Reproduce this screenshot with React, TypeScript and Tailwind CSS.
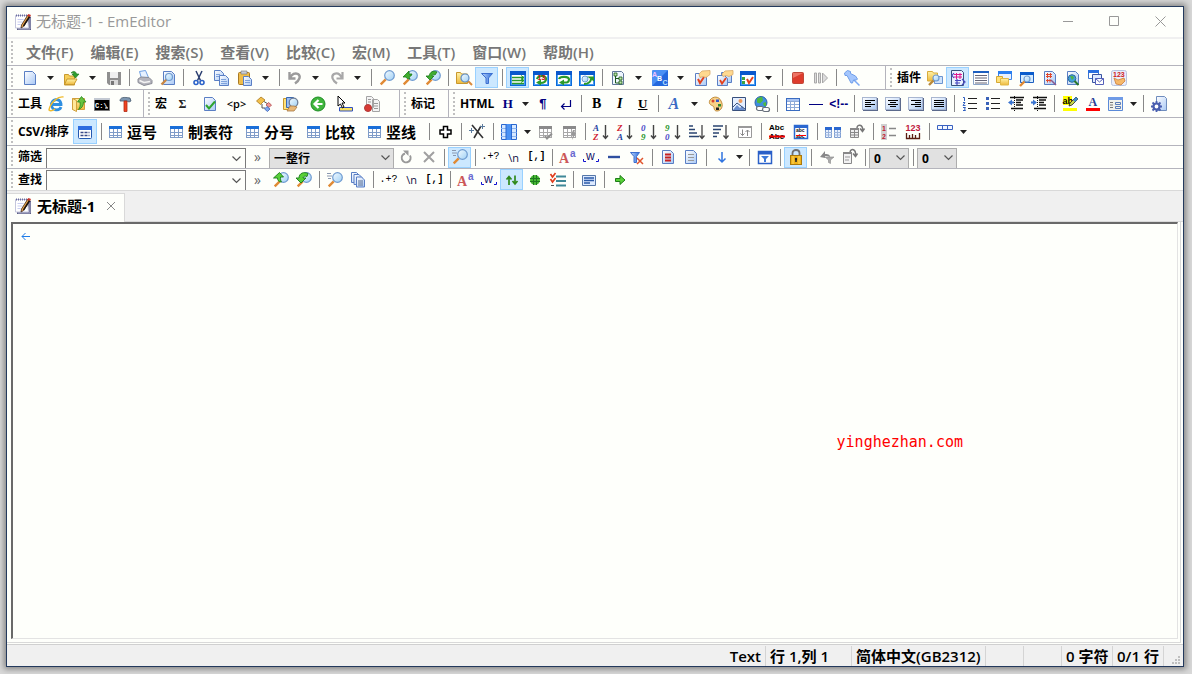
import { ReactNode } from "react";

interface BandProps {
  label?: string;
  className?: string;
  children?: ReactNode;
}

interface ToolsProps {
  items: string[];
  slot?: string;
}

/* ---------- shared icon parts ---------- */

const Svg = ({ children }: { children: ReactNode }) => (
  <svg width="16" height="16" viewBox="0 0 16 16" fill="none" className="overflow-visible" aria-hidden="true">
    {children}
  </svg>
);

const Gradients = () => (
  <svg width="0" height="0" className="absolute" aria-hidden="true">
    <defs>
      <linearGradient id="paper" x1="0" y1="0" x2="1" y2="1">
        <stop offset="0" stopColor="#ffffff" />
        <stop offset="1" stopColor="#a9c9f5" />
      </linearGradient>
      <linearGradient id="glass" x1="0" y1="0" x2="1" y2="1">
        <stop offset="0" stopColor="#f4fbff" />
        <stop offset="1" stopColor="#9fd0f5" />
      </linearGradient>
      <linearGradient id="folder" x1="0" y1="0" x2="0" y2="1">
        <stop offset="0" stopColor="#fff3a8" />
        <stop offset="1" stopColor="#eeb93c" />
      </linearGradient>
      <linearGradient id="blue" x1="0" y1="0" x2="1" y2="0">
        <stop offset="0" stopColor="#b9d4fb" />
        <stop offset="1" stopColor="#2f6fdc" />
      </linearGradient>
    </defs>
  </svg>
);

const Doc = ({ x = 2.5, y = 1.5, w = 11, h = 13 }) => (
  <path
    d={`M${x} ${y}h${w - 3}l3 3v${h - 3}h-${w}z`}
    fill="url(#paper)"
    stroke="#5a7fc4"
  />
);

const Lens = ({ x = 10.5, y = 5.5, r = 4.8, handle = "#e08a34" }) => (
  <>
    <path d={`M${x - r + 1} ${y + r - 1}L${x - r - 4} ${y + r + 4}`} stroke={handle} strokeWidth="2.4" />
    <circle cx={x} cy={y} r={r} fill="url(#glass)" stroke="#6f9bd0" strokeWidth="1.2" />
  </>
);

// lens with the handle to the lower right
const LensRight = ({ x = 8, y = 7, r = 3.5, handle = "#d98a3c" }) => (
  <>
    <path d={`M${x + r - 1} ${y + r - 1}l4 4`} stroke={handle} strokeWidth="2" />
    <circle cx={x} cy={y} r={r} fill="url(#glass)" stroke="#5f8cc4" strokeWidth="1.2" />
  </>
);

const Folder = () => (
  <path d="M0.5 2.5h4l1 1.5h6v9.5h-11z" fill="url(#folder)" stroke="#c9982c" />
);

const Frame = () => (
  <g shapeRendering="crispEdges">
    <rect x="0.5" y="1.5" width="15" height="14" fill="#fff" stroke="#0a6cdc" />
    <path d="M0 1h16v4h-16z" fill="#0a58cc" />
    <path d="M1.5 5v10M14.5 5v10M1 14.5h14" stroke="#4a9cf0" />
  </g>
);

const Table = ({ head = "#1a6fd8", line = "#7f9cc8" }) => (
  <g shapeRendering="crispEdges">
    <rect x="2" y="2" width="13" height="12" fill="#fff" />
    <path d="M2.5 5v8.5h12v-8.5M2 8.5h13M2 11h13M6.5 5v9M10.5 5v9" stroke={line} />
    <path d="M2 2h13v3h-13z" fill={head} />
  </g>
);

const AlignBox = ({ d }: { d: string }) => (
  <g shapeRendering="crispEdges">
    <rect x="0.5" y="1.5" width="14" height="12" fill="url(#paper)" stroke="#a8b6d0" />
    <path d="M1 14.5h15M15.5 2v12" stroke="#5c6a8c" />
    <path d={d} stroke="#000" />
  </g>
);

const SortPair = ({ top, bottom, a, b }: { top: string; bottom: string; a: string; b: string }) => (
  <>
    <text x="0" y="7" fontSize="9" fontWeight="700" fontStyle="italic" fontFamily="Liberation Serif" fill={a}>
      {top}
    </text>
    <text x="0" y="16" fontSize="9" fontWeight="700" fontStyle="italic" fontFamily="Liberation Serif" fill={b}>
      {bottom}
    </text>
    <path d="M12.5 1v13M10 11.5l2.5 3 2.5-3" stroke="#444" strokeWidth="1.4" />
  </>
);

const Glyph = ({ children, className }: { children: ReactNode; className: string }) => (
  <span className={`leading-none ${className}`}>{children}</span>
);

const Notepad = () => (
  <svg width="16" height="16" viewBox="0 0 16 16" fill="none" aria-hidden="true">
    <path d="M2 3h14v13h-14z" fill="#5c5e86" />
    <path d="M3 15h12v-11" stroke="#a6a7c4" />
    <path d="M0.5 1.5h12l1 12.5h-13z" fill="#fff" stroke="#c4c6dc" />
    <path d="M1 1.5h12" stroke="#6a6ca0" strokeDasharray="1 1" strokeWidth="2" />
    <path d="M2.5 5.5h6M2.5 8h5M2.5 10.5h3" stroke="#c8cdf0" />
    <path d="M12.5 1.5l2.5 1-6.5 10-2.5 1.5.5-3z" fill="#f0a848" stroke="#3d2a20" strokeWidth="0.8" />
    <path d="M14.5 2.5l-6 9.5" stroke="#1c1410" strokeWidth="1.5" />
    <path d="M12 1.500l3 1.500 1-2-2.500-1z" fill="#c8342c" />
  </svg>
);

/* ---------- icons by name ---------- */

const icons: Record<string, ReactNode> = {
  新建: <Svg><Doc /></Svg>,
  打开: (
    <Svg>
      <path d="M0.5 4.5h4l1 1.5h5v9h-10z" fill="#f6cf5a" stroke="#c99a2e" />
      <path d="M3 9h10l-3 5.5h-9.5z" fill="url(#folder)" stroke="#c99a2e" />
      <path d="M7 3c2-2.5 5-2 5.5 1h2.5l-3.5 4-3.5-4h2c-.5-1-1.5-1.500-3-1z" fill="#2f9e2f" stroke="#167016" strokeWidth="0.6" />
    </Svg>
  ),
  保存: (
    <Svg>
      <path d="M1 2h14v13h-12l-2-2z" fill="#8f8f8f" />
      <path d="M4 2h8v6h-8z" fill="#efefef" />
      <path d="M4 10h8v5h-8z" fill="#d8d8d8" />
      <path d="M5 11h3v4h-3z" fill="#777" />
    </Svg>
  ),
  打印: (
    <Svg>
      <path d="M2.5 1.5l6-1 3 7-7 1z" fill="#e6f1ff" stroke="#6fa0e4" />
      <path d="M1 9l3-2 8 .5 3 3v3l-8 2-6-3z" fill="#b4b4bc" stroke="#8a8c96" />
      <path d="M2.5 10.5l4.5 2 6-1" stroke="#f4f4f4" strokeWidth="1.5" />
    </Svg>
  ),
  打印预览: <Svg><Doc x={3.5} y={1.5} w={11} h={13} /><Lens x={9} y={7} r={3.5} handle="#c98845" /></Svg>,
  剪切: (
    <Svg>
      <path d="M5 1l4.5 9.5M11 1L6.5 10.5" stroke="#2b3f70" strokeWidth="1.5" />
      <circle cx="5" cy="12.5" r="2" stroke="#2b62c8" strokeWidth="1.6" />
      <circle cx="11" cy="12.5" r="2" stroke="#2b62c8" strokeWidth="1.6" />
    </Svg>
  ),
  复制: (
    <Svg>
      <Doc x={0.5} y={0.5} w={9} h={10} />
      <Doc x={5.5} y={5.5} w={9} h={10} />
      <path d="M2 4.5h4M2 6.5h3M7 9.5h5M7 11.5h6M7 13.5h6" stroke="#7fa3dc" />
    </Svg>
  ),
  粘贴: (
    <Svg>
      <rect x="1.5" y="2.5" width="11" height="12" rx="1" fill="#f0bd4a" stroke="#a87a24" />
      <path d="M4 1h6v3h-6z" fill="#c8ccd8" stroke="#777" strokeWidth="0.6" />
      <Doc x={6.5} y={6.5} w={8} h={9} />
      <path d="M8 10.5h5M8 12.5h5" stroke="#7fa3dc" />
    </Svg>
  ),
  撤消: <Svg><path d="M2.5 2v6.5h6M3 8c2-4 5-5.5 8-4 3 2 2 6-3 9.5" stroke="#9b9b9b" strokeWidth="2.4" /></Svg>,
  重复: <Svg><path d="M13.5 2v6.5h-6M13 8c-2-4-5-5.5-8-4-3 2-2 6 3 9.5" stroke="#a8a8a8" strokeWidth="2.2" /></Svg>,
  查找: <Svg><Lens /></Svg>,
  查找上一个: (
    <Svg>
      <Lens />
      <path d="M1 7l6-6v3h3l-1 2c-2 0-2 1-1 3-2 0-4-1-4-2z" fill="#3fae2d" stroke="#187a18" strokeWidth="0.8" />
    </Svg>
  ),
  查找下一个: (
    <Svg>
      <Lens />
      <path d="M4 6c1-4 4-6 8-4l-2 3c-2-1-3 0-3 1h2l-4 4-4-4z" fill="#3fae2d" stroke="#187a18" strokeWidth="0.8" />
    </Svg>
  ),
  在文件中查找: <Svg><Folder /><LensRight x={9} y={8} r={4} /></Svg>,
  筛选器: <Svg><path d="M2.5 3.5h11l-4 4.5v5.5h-2.5v-5.5z" fill="url(#blue)" stroke="#3c6fd0" /></Svg>,
  不换行: (
    <Svg>
      <Frame />
      <path d="M2 7.5h12M2 10.500h12M2 13.500h12" stroke="#2a9a2a" strokeWidth="1.4" />
      <path d="M11 5.5l3 2-3 2M11 8.5l3 2-3 2" stroke="#2a9a2a" />
    </Svg>
  ),
  按字符换行: (
    <Svg>
      <Frame />
      <path d="M4 9c1-4 9-4 9 0s-4 4-6 4" stroke="#2a9a2a" strokeWidth="2.2" />
      <path d="M8 9.5v6l-5-3z" fill="#2a9a2a" />
      <text x="4.5" y="10" fontSize="7" fontWeight="700" fontFamily="Liberation Sans" fill="#d01010">13</text>
    </Svg>
  ),
  按窗口换行: (
    <Svg>
      <Frame />
      <path d="M3 9c1-3 10-3 10 .5s-3 3-6 3" stroke="#2a9a2a" strokeWidth="2.2" />
      <path d="M8 9.5v6l-5-3z" fill="#2a9a2a" />
    </Svg>
  ),
  按页面换行: (
    <Svg>
      <Frame />
      <circle cx="6" cy="9" r="3" fill="url(#glass)" stroke="#6f9bd0" />
      <path d="M5 14c5 0 7-3 7-5" stroke="#2a9a2a" strokeWidth="2" />
      <path d="M8 6.5h7v5z" fill="#2a9a2a" />
    </Svg>
  ),
  大纲: (
    <Svg>
      <path d="M2.5 1.5h9l2 2v11h-11z" fill="#eef6ff" stroke="#60789a" />
      <path d="M5.5 4v9h4M5.5 8.5h4M5 4h2" stroke="#1d5a1d" />
      <path d="M4 3h3v3h-3zM9 7h3v3h-3zM9 11h3v3h-3z" fill="#bfe8a8" stroke="#1d5a1d" strokeWidth="0.8" />
    </Svg>
  ),
  配置: (
    <Svg>
      <rect width="16" height="16" rx="1" fill="#4b90f4" />
      <path d="M0 16L16 0v16z" fill="#2468de" />
      <text x="0" y="7" fontSize="7" fontWeight="700" fontFamily="Liberation Sans" fill="#f0c4ff">A</text>
      <text x="5" y="11" fontSize="7" fontWeight="700" fontFamily="Liberation Sans" fill="#fff">B</text>
      <text x="10.5" y="15" fontSize="7" fontWeight="700" fontFamily="Liberation Sans" fill="#bfe2ff">C</text>
    </Svg>
  ),
  属性: (
    <Svg>
      <Doc x={1.5} y={3.5} w={11} h={12} />
      <path d="M4 9l2 4 4-6" stroke="#e4421e" strokeWidth="2" />
      <path d="M5 4l3-3 8-.5v4l-4 3-3-1-3 1z" fill="#ffd98f" stroke="#d8a868" strokeWidth="0.8" />
    </Svg>
  ),
  所有配置属性: (
    <Svg>
      <Doc x={4.5} y={2.5} w={10} h={10} />
      <Doc x={0.5} y={5.5} w={10} h={10} />
      <path d="M3 10l2 3.5 4-5.5" stroke="#e4421e" strokeWidth="1.8" />
      <path d="M5 4l3-3 8-.5v4l-4 2-3-1-3 1z" fill="#ffd98f" stroke="#d8a868" strokeWidth="0.8" />
    </Svg>
  ),
  自定义: <Svg><Frame /><path d="M2 7h3v3h-3zM2 11h3v3h-3z" fill="#3fa33f" /><path d="M7 9l2 4 4-6" stroke="#e4421e" strokeWidth="2" /></Svg>,
  停止录制: <Svg><rect x="2.5" y="2.5" width="11" height="11" rx="1" fill="#dd3c2c" stroke="#c04838" /><path d="M3 3h10l-10 5z" fill="#ee7464" /></Svg>,
  运行宏: <Svg><path d="M1.5 3v10h2v-10zM5.5 3v10h2v-10zM9.5 3v10l5-5z" fill="#dcdcdc" stroke="#a8a8a8" /></Svg>,
  固定: (
    <Svg>
      <path d="M9 9l6.5 6.5" stroke="#7aa8f4" strokeWidth="1.5" />
      <path d="M0.5 3l3-2.5 3 1v2l5 2.5 2 3-1 1-3 0-1 3-1.5 0-1.5-3-2.5-4.5-2 0z" fill="#a4c6fd" stroke="#6797e6" strokeWidth="0.9" />
    </Svg>
  ),
  资源管理器: (
    <Svg>
      <path d="M0.5 1.5h5l1 1.5h4v8h-10z" fill="url(#folder)" stroke="#d8ac3c" />
      <path d="M7.5 6.5h8v7h-8z" fill="#cfe3fb" stroke="#6b94d0" />
      <Lens x={9} y={8} r={3} handle="#b98a3a" />
    </Svg>
  ),
  十六进制: (
    <Svg>
      <path d="M1.5 0.5h10l2 2v13h-12z" fill="#eaf2ff" stroke="#38537c" />
      <path d="M4 4.5h8M4 7h8M6.5 3v6M10 3v6" stroke="#e01890" />
      <path d="M4 3l-2 2.500 2 2.500M5 10.5h6M5 13h5M7 9v6M12 9l3 3-3 3" stroke="#4848c0" strokeWidth="1.2" />
    </Svg>
  ),
  大纲文本: (
    <Svg>
      <path d="M0.5 1.5h15v13h-15z" fill="#fff" stroke="#8ba5c8" />
      <path d="M0 1h16v2h-16z" fill="#1d5fc0" />
      <path d="M2 5.5h12M2 8h12M2 10.5h12M2 13h12" stroke="#667" />
    </Svg>
  ),
  项目: (
    <Svg>
      <path d="M2.5 1.5h13v8h-13z" fill="#e8f1ff" stroke="#3a84e8" />
      <path d="M2 1h14v3h-14z" fill="#2a7ff0" />
      <path d="M0.5 6.5h6v6h-6z" fill="#ffe27a" stroke="#d5a834" />
      <path d="M4.5 8.5h8v6.5h-8z" fill="url(#folder)" stroke="#e0b848" />
    </Svg>
  ),
  网页预览: <Svg><path d="M1.5 2.5h13v10h-13z" fill="#d4ecff" stroke="#1d5fc0" /><path d="M1 2h14v3h-14z" fill="#0a5ccc" /><Lens x={8} y={9} r={3} /></Svg>,
  搜索插件: (
    <Svg>
      <Doc />
      <path d="M4 4.5h6M4 6.5h6M4 10.5h5M5.500 3v5M8.5 3v5M5.5 9v3.5M8 9v3.5" stroke="#e0482c" />
      <path d="M9 10l5 5" stroke="#8c5a8c" strokeWidth="1.5" />
    </Svg>
  ),
  网络搜索: (
    <Svg>
      <Doc />
      <circle cx="7" cy="8.5" r="3.8" fill="#43a0d8" stroke="#2c6c9c" />
      <path d="M5 6l3 0 1 2-2 2z" fill="#4fb34a" />
      <path d="M9.5 11l4 4" stroke="#287828" strokeWidth="2" />
    </Svg>
  ),
  窗口列表: (
    <Svg>
      <path d="M0.5 0.5h10v8h-10z" fill="#fff" stroke="#3a74d0" />
      <path d="M0 0h11v3h-11z" fill="#2a6fe0" />
      <path d="M4.5 4.5h9v8h-9z" fill="#dfeaff" stroke="#3a54a0" />
      <path d="M7.5 8.5h8v6h-8z" fill="#fff" stroke="#5560b8" />
      <path d="M7.5 8.5l4 3.5 4-3.5" stroke="#5560b8" />
    </Svg>
  ),
  字数统计: (
    <Svg>
      <rect x="0.5" y="0.5" width="15" height="15" rx="2" fill="#e9eefb" stroke="#b8c3e0" />
      <text x="2" y="7" fontSize="7" fontWeight="700" fontFamily="Liberation Sans" fill="#d02020">123</text>
      <path d="M3 8l4 2 6-2 1 3-4 4-5-1z" fill="#f6b96a" stroke="#cc7c3a" strokeWidth="0.8" />
    </Svg>
  ),

  浏览器: (
    <Svg>
      <path d="M13 11c-1.5 4-9 4-9.5-2s8-7.5 9.5-1.5v1h-8.5" stroke="#2f8fe0" strokeWidth="2.8" />
      <path d="M15.5 1c-5-1-13 5-14.5 13 2 2 4 .5 6-1" stroke="#f0bc30" strokeWidth="1.4" />
    </Svg>
  ),
  浏览文件夹: (
    <Svg>
      <path d="M1.5 2.5h12v11h-12z" fill="url(#folder)" stroke="#d0a03c" />
      <path d="M1.5 2.5l4 2v11l-4-2z" fill="#ffe89a" stroke="#d0a03c" />
      <path d="M10.5 0.5l4.5 5.5h-2.5c0 4-2 6.5-5 7.5 1.5-2 2-4 1.5-7.5h-2.5z" fill="#66c440" stroke="#25861c" strokeWidth="0.8" />
    </Svg>
  ),
  命令提示符: (
    <Svg>
      <path d="M0.5 2.5h15v12h-15z" fill="#000" stroke="#777" />
      <path d="M0 2h16v2h-16z" fill="#c3c9d2" />
      <text x="1" y="12" fontSize="7" fontWeight="700" fontFamily="Liberation Mono" fill="#fff">C:\</text>
      <path d="M11 12h3" stroke="#fff" />
    </Svg>
  ),
  外部工具: (
    <Svg>
      <path d="M3 5c0-4 4-4 10-3l1 3-2 1-2-1h-7z" fill="#7c96b0" stroke="#44586c" strokeWidth="0.8" />
      <path d="M7 5h3v10.5h-3z" fill="#f04420" stroke="#b02a14" strokeWidth="0.8" />
    </Svg>
  ),
  求和: <Glyph className="font-['Liberation_Serif'] text-[12px] font-bold text-[#222]">Σ</Glyph>,
  验证: <Svg><Doc /><path d="M4 9l3 3.5 6-7" stroke="#2fa52f" strokeWidth="2" /></Svg>,
  段落标签: <Glyph className="text-[11px] font-semibold text-black">&lt;p&gt;</Glyph>,
  代码片段: (
    <Svg>
      <path d="M0.5 5l4.5-4 4 3-4.5 4.5z" fill="#f3c04a" stroke="#a8771c" strokeWidth="0.8" />
      <path d="M6 8v4h3M8 5.500l4 2.500" stroke="#555" />
      <path d="M10 9l2.5-2.5 3 2.5-2.5 2.5z" fill="#f09898" stroke="#b04848" strokeWidth="0.8" />
      <path d="M8.5 13l2.5-2.5 3 2.5-2.5 2.5z" fill="#7fa8f0" stroke="#3a62b8" strokeWidth="0.8" />
    </Svg>
  ),
  项目搜索: (
    <Svg>
      <path d="M0.5 2.5h5v11h-5z" fill="#ffe27a" stroke="#c9982c" />
      <path d="M3.5 1.5h7v10h-7z" fill="#9bc0f4" stroke="#3a68b0" />
      <circle cx="10.5" cy="6.5" r="4.3" fill="url(#glass)" stroke="#6f7f98" strokeWidth="1.3" />
      <path d="M7 10l-3 5h7l3-4-3-1z" fill="#e8b878" stroke="#a87a44" strokeWidth="0.8" />
    </Svg>
  ),
  返回: (
    <Svg>
      <circle cx="8" cy="8" r="7" fill="#3fb53c" stroke="#1d8d24" />
      <path d="M12.5 8H5M8.5 4L4.5 8l4 4" stroke="#fff" strokeWidth="2.2" />
    </Svg>
  ),
  选取: (
    <Svg>
      <path d="M2.5 11.5h13v3.5h-13z" fill="#f8e060" stroke="#3050c0" />
      <path d="M1 0v10l2.5-2 2 4 1.5-1-2-4h3z" fill="#fff" stroke="#000" />
    </Svg>
  ),
  录制项: (
    <Svg>
      <path d="M2.5 0.5h5l2 2v9h-7zM8.5 3.5h5l2 2v10h-7z" fill="#f4f4f4" stroke="#a4a4a4" />
      <path d="M4 3.5h3M4 6h3M10 7.5h4M10 10h4M10 12.5h4" stroke="#999" />
      <circle cx="4" cy="12" r="3.5" fill="#d83a34" stroke="#b03a38" />
    </Svg>
  ),

  标题: <Glyph className="font-['Liberation_Serif'] text-[13px] font-bold text-[#000080]">H</Glyph>,
  段落: <Glyph className="font-['Liberation_Sans'] text-[13px] font-bold text-[#000080]">¶</Glyph>,
  换行: <Svg><path d="M12.5 4v6.5h-9M6.5 7.5l-3 3 3 3" stroke="#000080" strokeWidth="1.2" /></Svg>,
  粗体: <Glyph className="font-['Liberation_Serif'] text-[14px] font-bold text-black">B</Glyph>,
  斜体: <Glyph className="font-['Liberation_Serif'] text-[14px] font-bold text-black italic">I</Glyph>,
  下划线: <Glyph className="font-['Liberation_Serif'] text-[13px] font-bold text-black underline">U</Glyph>,
  字体: <Glyph className="font-['Liberation_Serif'] text-[16px] font-bold text-[#3a6ac4] italic">A</Glyph>,
  颜色: (
    <Svg>
      <path d="M2 4c3-4 9-4 11 1 3 5 0 10-4 10-4 0-2-4-4-5s-5-2-3-6z" fill="#f8d288" stroke="#c08c3c" />
      <circle cx="5" cy="5" r="1.5" fill="#d8442c" />
      <path d="M8 3.5h3v2.5h-3z" fill="#3456c8" />
      <path d="M10 8h3v2.5h-3z" fill="#2f8a2f" />
      <path d="M8 11.5h3v2.5h-3z" fill="#222" />
    </Svg>
  ),
  图片: (
    <Svg>
      <path d="M1.5 1.5h13v13h-13z" fill="#e4efff" stroke="#38507c" />
      <path d="M2 14l4-5 3 3 2-2 3 4z" fill="#6a8fd0" />
      <path d="M2 11l4-4 8 6" stroke="#38507c" />
      <circle cx="9.5" cy="5" r="2" fill="#f09a5a" />
    </Svg>
  ),
  超链接: (
    <Svg>
      <circle cx="7" cy="6.5" r="6" fill="#3f8fe0" stroke="#2a5ea8" />
      <path d="M3 2.5l5-2 1 4-3 3-3-1zM9 7l3-1 0 4-2 0z" fill="#4fb840" />
      <rect x="2.5" y="10.5" width="7" height="4" rx="2" fill="#fff" stroke="#68707c" strokeWidth="1.2" />
      <rect x="8.5" y="11.5" width="7" height="4" rx="2" fill="#fff" stroke="#68707c" strokeWidth="1.2" />
    </Svg>
  ),
  表格: (
    <Svg>
      <g shapeRendering="crispEdges">
        <path d="M1.5 2.5h13v12h-13z" fill="#fff" stroke="#3a6cc0" />
        <path d="M2 3h12v2h-12z" fill="#a9c4f2" />
        <path d="M2 5.5h12M2 8.5h12M2 11.5h12M5.5 5v9M9.5 5v9" stroke="#8fabd8" />
      </g>
    </Svg>
  ),
  水平线: <Svg><path d="M1 8.5h14" stroke="#000080" /></Svg>,
  注释: <Glyph className="font-['Liberation_Sans'] text-[12px] font-bold text-[#000080]">&lt;!--</Glyph>,
  左对齐: <Svg><AlignBox d="M3 4.5h10M3 6.5h6M3 8.5h10M3 10.5h6" /></Svg>,
  居中: <Svg><AlignBox d="M3 4.5h10M5 6.5h6M3 8.5h10M5 10.5h6" /></Svg>,
  右对齐: <Svg><AlignBox d="M3 4.5h10M7 6.5h6M3 8.5h10M7 10.5h6" /></Svg>,
  两端对齐: <Svg><AlignBox d="M3 4.5h10M3 6.5h10M3 8.5h10M3 10.5h10" /></Svg>,
  编号列表: (
    <Svg>
      <path d="M6 2.5h9M6 7.5h9M6 12.5h9" stroke="#222" />
      <path d="M1 1.5h1.5v3.500M1 6.5h2l-2 3h2.5M1 11.5h2.5l-1 1.5 1 1.5h-2.5" stroke="#2f5fc0" />
    </Svg>
  ),
  项目符号: <Svg><path d="M6 2.5h9M6 7.5h9M6 12.5h9" stroke="#222" /><path d="M1 1h3v3h-3zM1 6h3v3h-3zM1 11h3v3h-3z" fill="#3a62b8" /></Svg>,
  减少缩进: (
    <Svg>
      <path d="M2 1.5h14M8 4h7M8 6.5h5M8 9h7M3 12.5h12" stroke="#111" strokeWidth="1.3" />
      <path d="M6.5 0v16" stroke="#111" strokeDasharray="1 1" />
      <path d="M0 6.5l4-3v2h2v2h-2v2z" fill="#3a74d0" />
    </Svg>
  ),
  增加缩进: (
    <Svg>
      <path d="M2 1.5h14M8 4h7M8 6.5h5M8 9h7M3 12.5h12" stroke="#111" strokeWidth="1.3" />
      <path d="M6.5 0v16" stroke="#111" strokeDasharray="1 1" />
      <path d="M6 6.5l-4-3v2h-2v2h2v2z" fill="#3a74d0" />
    </Svg>
  ),
  突出显示: (
    <Svg>
      <path d="M1 0h9v9h-9zM1 12h14v3h-14z" fill="#ffff00" />
      <text x="0.5" y="8" fontSize="9" fontWeight="700" fontFamily="Liberation Sans" fill="#000">ab</text>
      <path d="M14 1l2 2-6 6-3 1 1-3z" fill="#c8d848" stroke="#222" strokeWidth="0.8" />
      <path d="M14 1l2 2-3 3-2-2z" fill="#3a8ad0" />
    </Svg>
  ),
  字体颜色: (
    <Svg>
      <text x="3.5" y="10" fontSize="12" fontFamily="Liberation Serif" fontWeight="700" fill="#2a3f98">A</text>
      <path d="M1 12h14v3h-14z" fill="#ff0000" />
    </Svg>
  ),
  窗体: (
    <Svg>
      <path d="M0.5 1.5h14v13h-14z" fill="#f2f2ec" stroke="#5a8ad8" />
      <path d="M0 1h15v3h-15z" fill="#6f9be6" />
      <path d="M2 6.5h3M2 9h3M2 11.5h3" stroke="#777" />
      <path d="M7.5 6.5h5v2h-5zM7.5 10.5h5v2h-5z" stroke="#5a7cb8" />
    </Svg>
  ),
  设置: (
    <Svg>
      <path d="M5.5 0.5h8l2 2v12h-10z" fill="url(#paper)" stroke="#6f8dbd" />
      <circle cx="5.5" cy="10.5" r="3" fill="#fff" stroke="#4a5fb0" strokeWidth="2.2" />
      <path d="M5.5 5v2M5.5 14v2M0 10.5h2M9 10.5h2M1.5 6.5l1.5 1.5M8 13l1.5 1.5M9.5 6.5l-1.5 1.5M3 13l-1.5 1.5" stroke="#4a5fb0" strokeWidth="1.8" />
    </Svg>
  ),

  标准模式: (
    <Svg>
      <rect x="1.5" y="2.5" width="13" height="12" rx="1" fill="#fff" stroke="#2458b0" />
      <path d="M1 2h14v4h-14z" fill="#2d6cdf" />
      <path d="M3.5 8.5h9M3.5 11.5h9" stroke="#3a4a88" strokeDasharray="3 1" strokeWidth="1.3" />
    </Svg>
  ),
  CSV: <Svg><Table /></Svg>,
  合并: <Svg><path d="M6.5 2.5h4v3.5h3.5v4h-3.5v3.5h-4v-3.5h-3.5v-4h3.5z" fill="#fff" stroke="#000" strokeWidth="1.5" /></Svg>,
  转换: <Svg><path d="M3 1l11 13M12 2L5 14" stroke="#333" strokeWidth="1.6" /><path d="M2.5 4v5M0 6.5h5M13.5 0v5M11 2.5h5" stroke="#5a7a9c" /></Svg>,
  列选择: (
    <Svg>
      <path d="M0.5 0.5h15v15h-15z" fill="#d6e8ff" stroke="#2a68d0" />
      <path d="M5 0h5.5v16h-5.5z" fill="#4a92f4" />
      <path d="M0 4.5h5M0 8.5h5M0 12.5h5M10.5 4.5h5M10.5 8.5h5M10.5 12.5h5" stroke="#8ab4f0" />
      <path d="M5 0v16M10.5 0v16" stroke="#2a68d0" />
    </Svg>
  ),
  修改表: <Svg><Table head="#8a8a8a" line="#a8a8a8" /><path d="M8 12l2 2.5 5-5" stroke="#909090" strokeWidth="2" /></Svg>,
  更新表: <Svg><Table head="#8a8a8a" line="#a8a8a8" /><path d="M12 6l-2 5h2l-1 5 4-7h-2l1-3z" fill="#999" /></Svg>,
  升序: <Svg><SortPair top="A" bottom="Z" a="#1f3fa0" b="#d02030" /></Svg>,
  降序: <Svg><SortPair top="Z" bottom="A" a="#d02030" b="#1f3fa0" /></Svg>,
  数字升序: <Svg><SortPair top="0" bottom="9" a="#4a4ac8" b="#2a962a" /></Svg>,
  数字降序: <Svg><SortPair top="9" bottom="0" a="#2a962a" b="#4a4ac8" /></Svg>,
  长度升序: (
    <Svg>
      <path d="M0 2h4M0 5.5h6M0 9h8M0 12.5h10" stroke="#2a4470" strokeWidth="1.7" />
      <path d="M13 1v13M10.5 11.5l2.5 3 2.5-3" stroke="#444" strokeWidth="1.3" />
    </Svg>
  ),
  长度降序: (
    <Svg>
      <path d="M0 2h10M0 5.5h8M0 9h6M0 12.5h4" stroke="#2a4470" strokeWidth="1.7" />
      <path d="M13 1v13M10.5 11.5l2.5 3 2.5-3" stroke="#444" strokeWidth="1.3" />
    </Svg>
  ),
  高级排序: (
    <Svg>
      <path d="M1.5 2.5h13v11h-13z" fill="#fff" stroke="#999" />
      <path d="M1 2h14v2h-14z" fill="#999" />
      <path d="M5.5 5.5v6M3.5 9.5l2 2 2-2M10.5 12v-6M8.5 8l2-2 2 2" stroke="#888" />
    </Svg>
  ),
  删除重复: (
    <Svg>
      <text x="0" y="6" fontSize="8" fontWeight="700" fontFamily="Liberation Sans" fill="#000">Abc</text>
      <text x="0" y="15" fontSize="8" fontWeight="700" fontFamily="Liberation Sans" fill="#000">Abc</text>
      <path d="M0 12.5h16" stroke="#f00000" strokeWidth="2" />
    </Svg>
  ),
  高级删除重复: (
    <Svg>
      <rect x="1.5" y="1.5" width="13" height="13" fill="#fff" stroke="#2a68d0" strokeWidth="1.5" />
      <path d="M1 1h14v3h-14z" fill="#2a68d0" />
      <text x="3" y="8" fontSize="5" fontWeight="700" fontFamily="Liberation Sans" fill="#111">abc</text>
      <text x="3" y="14" fontSize="5" fontWeight="700" fontFamily="Liberation Sans" fill="#111">abc</text>
      <path d="M3 11.5h10" stroke="#f00" />
    </Svg>
  ),
  拆分列: (
    <Svg>
      <path d="M0.5 3.5h6v10h-6zM9.5 3.5h6v10h-6z" fill="#e8f1ff" stroke="#7c9cd0" />
      <path d="M0 3h7v3h-7zM9 3h7v3h-7z" fill="#2a68d0" />
      <path d="M0 8.5h7M0 11h7M9 8.5h7M9 11h7M3.5 6v8M12.5 6v8" stroke="#9ab4dc" />
    </Svg>
  ),
  移动列: (
    <Svg>
      <path d="M1.5 4.5h8v9h-8z" fill="#eee" stroke="#888" />
      <path d="M1 4h9v2h-9z" fill="#888" />
      <path d="M5.5 5v9M1 8.5h9M1 11h9" stroke="#888" />
      <path d="M8 4c0-4 6-4 5.5 2M11 4.5l2.5 3 2-3" stroke="#777" strokeWidth="1.5" />
    </Svg>
  ),
  行号: (
    <Svg>
      <path d="M0 0h6v16h-6z" fill="#d0d0d0" />
      <text x="1" y="7" fontSize="7" fontWeight="700" fontFamily="Liberation Sans" fill="#c02030">1</text>
      <text x="1" y="15" fontSize="7" fontWeight="700" fontFamily="Liberation Sans" fill="#c02030">2</text>
      <path d="M8 4.5h7M8 11.5h7" stroke="#888" strokeWidth="1.6" />
    </Svg>
  ),
  标尺: (
    <Svg>
      <text x="0.5" y="7" fontSize="9" fontWeight="700" fontFamily="Liberation Sans" fill="#c02040">123</text>
      <path d="M1.5 9v5.5h13v-5.5M4.5 11v3M7.5 10v4M10.5 11v3" stroke="#5a1c10" strokeWidth="1.3" />
    </Svg>
  ),
  标题行: <Svg><path d="M0.5 1.5h15v4h-15zM5.5 1.5v4M10.5 1.5v4" fill="#f4f8ff" stroke="#3a62c0" /></Svg>,

  刷新: <Svg><path d="M12 6.5a4.5 4.5 0 1 1-5-2" stroke="#999" strokeWidth="1.9" /><path d="M5 1.5h5.5v5.5z" fill="#999" /></Svg>,
  中止: <Svg><path d="M3 3l10 10M13 3L3 13" stroke="#a0a0a0" strokeWidth="2" /></Svg>,
  增量搜索: <Svg><Lens /><path d="M0 1.5h4M0 4h5M1 6.5h3" stroke="#8a98b0" /></Svg>,
  正则表达式: <Glyph className="font-['Liberation_Mono'] text-[10px] text-black">.+?</Glyph>,
  转义序列: <Glyph className="text-[11px] text-[#111144]">\n</Glyph>,
  数字范围: <Glyph className="font-['Liberation_Mono'] text-[10px] font-bold text-black">[,]</Glyph>,
  区分大小写: (
    <Svg>
      <text x="-1" y="14" fontSize="14" fontFamily="Liberation Serif" fontWeight="700" fill="#cc5858">A</text>
      <text x="10" y="8" fontSize="10" fontFamily="Liberation Sans" fontWeight="700" fill="#6a6ad0">a</text>
    </Svg>
  ),
  全字匹配: (
    <Svg>
      <text x="3" y="10.5" fontSize="12" fontFamily="Liberation Sans" fill="#14146c">w</text>
      <path d="M0.5 10v2.5h2.5M15.5 10v2.5h-2.5" stroke="#1010d0" />
    </Svg>
  ),
  反转: <Svg><path d="M2 8h12" stroke="#2f4fa0" strokeWidth="2.4" /></Svg>,
  清除筛选: (
    <Svg>
      <path d="M1.5 3.5h9l-3 4v6h-2.5v-6z" fill="url(#blue)" stroke="#3c6fd0" />
      <path d="M8 9l6 6M14 9l-6 6" stroke="#e0532c" strokeWidth="1.5" />
    </Svg>
  ),
  仅书签: <Svg><Doc /><path d="M5 5.5h6M5 8.5h6M5 11.5h6" stroke="#c82020" strokeWidth="2" /></Svg>,
  显示全部: <Svg><Doc /><path d="M5 5.5h6M5 8.5h6M5 11.5h6" stroke="#999" strokeWidth="1.2" /></Svg>,
  向下: <Svg><path d="M8 3v10M4.5 9.5l3.5 3.5 3.5-3.5" stroke="#2f74e0" strokeWidth="1.5" /></Svg>,
  高级筛选: (
    <Svg>
      <rect x="1.5" y="2.5" width="13" height="12" fill="#fff" stroke="#2a60c8" strokeWidth="1.5" />
      <path d="M1 2h14v3.5h-14z" fill="#2a60c8" />
      <path d="M4 7h8l-3 3v3h-2v-3z" fill="#3c78d8" />
    </Svg>
  ),
  锁定: (
    <Svg>
      <path d="M4.5 7v-3c0-4 7-4 7 0v3" stroke="#6f6f6f" strokeWidth="1.8" />
      <rect x="2.5" y="6.5" width="11" height="9" fill="#f0b21c" stroke="#a8780c" />
      <path d="M5 7v8M11 7v8" stroke="#ffd95a" />
      <circle cx="8" cy="10" r="1.2" fill="#222" />
      <path d="M8 10v3" stroke="#222" strokeWidth="1.5" />
    </Svg>
  ),
  撤回筛选: (
    <Svg>
      <path d="M1 8l5-6v3c4 0 5 1 5 3-2-1-3-1-5-1v2z" fill="#888" />
      <path d="M6 8h9l-3.5 3v3.5l-2-1v-2.5z" fill="#aaa" stroke="#888" strokeWidth="0.6" />
    </Svg>
  ),
  提取到新文件: (
    <Svg>
      <path d="M1.5 3.5h8v11h-8z" fill="#f2f2f2" stroke="#888" />
      <path d="M1 3h9v2h-9z" fill="#888" />
      <path d="M3 8h5M3 11h4" stroke="#999" />
      <path d="M8 3c1-4 6-3 5.5 3M11 4.5l2.5 3 2-3" stroke="#777" strokeWidth="1.5" />
    </Svg>
  ),

  上一个: (
    <Svg>
      <Lens />
      <path d="M0.5 6l6-5.5 4 4.5h-3c0 2 0 4 1 5-3 0-4-2-4-4z" fill="#58d038" stroke="#187a18" strokeWidth="0.9" />
    </Svg>
  ),
  下一个: (
    <Svg>
      <Lens />
      <path d="M3 6c0-5 5-6.5 9-4.5l-1 3c-2-1-4 0-4 1.5h3l-5 5-5-5z" fill="#58d038" stroke="#187a18" strokeWidth="0.9" />
    </Svg>
  ),
  所有文档: (
    <Svg>
      <Doc x={1.5} y={0.5} w={8} h={10} />
      <Doc x={4} y={2.5} w={8} h={10} />
      <Doc x={6.5} y={5} w={8} h={10} />
      <path d="M8 9h5M8 11h5M8 13h5" stroke="#5a6f90" />
    </Svg>
  ),
  循环查找: <Svg><path d="M5 13v-8M2.5 7.5l2.5-3 2.5 3M11 3.5v8M8.5 9l2.5 3 2.5-3" stroke="#2f8a1c" strokeWidth="1.7" /></Svg>,
  网格标记: (
    <Svg>
      <circle cx="8" cy="8" r="5" fill="#46b832" />
      <path d="M6.5 3v10M9.5 3v10M3 6.5h10M3 9.5h10" stroke="#1f7a1f" />
    </Svg>
  ),
  批量查找: (
    <Svg>
      <path d="M6 4.5h10M6 9h10M6 13.5h10" stroke="#3f8898" strokeWidth="1.8" />
      <path d="M0.5 2l2 3 3-4M0.5 7l2 3 3-4" stroke="#e03c1c" strokeWidth="1.6" />
      <path d="M1 13.5h3" stroke="#555" />
    </Svg>
  ),
  输出栏: <Svg><path d="M1.5 3.5h13v10h-13z" fill="#dbe9ff" stroke="#5577a8" /><path d="M3 6h10M3 8.5h10M3 11h6" stroke="#2a5aa8" strokeWidth="1.5" /></Svg>,
  前进: <Svg><path d="M3.5 6.5h4.5v-3l5 4.5-5 4.5v-3h-4.5z" fill="#58d038" stroke="#1d7d18" /></Svg>,
};

/* ---------- toolbar pieces ---------- */

const Separator = () => (
  <span className="flex w-2 shrink-0 justify-center">
    <span className="h-[17px] w-px bg-[#888]" />
  </span>
);

const Arrow = () => (
  <svg width="7" height="4" viewBox="0 0 7 4" aria-hidden="true">
    <path d="M0 0h7L3.5 4z" fill="#222" />
  </svg>
);

// "|" is a separator, "v" a wide drop-down arrow, "u" a narrow one, a leading "*" marks a pressed button
const Tools = ({ items, slot = "h-[21px] w-[23px]" }: ToolsProps) => (
  <>
    {items.map((item, index) => {
      if (item === "|") return <Separator key={index} />;
      if (item === "v" || item === "u") {
        return (
          <button
            key={index}
            aria-label="更多"
            className={`flex h-[21px] shrink-0 items-center justify-center ${item === "v" ? "w-[19px]" : "w-3"}`}
          >
            <Arrow />
          </button>
        );
      }
      const pressed = item.startsWith("*");
      const name = pressed ? item.slice(1) : item;
      return (
        <button
          key={index}
          title={name}
          aria-label={name}
          aria-pressed={pressed}
          className={`flex shrink-0 items-center justify-center ${slot} ${
            pressed ? "border border-[#99d1ff] bg-[#cce8ff]" : ""
          }`}
        >
          {icons[name]}
        </button>
      );
    })}
  </>
);

const Grip = () => (
  <span className="flex w-[11px] shrink-0 items-stretch self-stretch py-[2px] pl-1">
    <span className="border-l-2 border-dotted border-[#c0c0c0]" />
  </span>
);

const Band = ({ label, className = "", children }: BandProps) => (
  <div role="toolbar" aria-label={label} className={`flex items-center ${className}`}>
    <Grip />
    {label && (
      <span className="mr-[2px] shrink-0 text-[12px] leading-4 font-bold whitespace-nowrap text-black">
        {label}
      </span>
    )}
    {children}
  </div>
);

const Chevron = () => (
  <svg width="9" height="6" viewBox="0 0 9 6" fill="none" aria-hidden="true">
    <path d="M0.5 0.5l4 4 4-4" stroke="#555" strokeWidth="1.2" />
  </svg>
);

const Combo = ({ label }: { label: string }) => (
  <>
    <div className="ml-[2px] flex h-5 w-[200px] shrink-0 self-end border border-b-0 border-[#7a7a7a]">
      <input aria-label={label} className="min-w-0 flex-1 px-1 text-[12px] outline-none" />
      <button aria-label={`${label}历史`} className="flex w-[17px] items-center justify-center">
        <Chevron />
      </button>
    </div>
    <button aria-label="展开" className="w-[23px] shrink-0 text-[14px] leading-4 text-[#666]">
      »
    </button>
  </>
);

const Select = ({ label, value, className }: { label: string; value: string; className: string }) => (
  <div className={`relative h-5 shrink-0 self-end ${className}`}>
    <select
      aria-label={label}
      className="block h-full w-full appearance-none border border-b-0 border-[#adadad] bg-[#e1e1e1] px-1 text-[12px] leading-4 font-bold text-black"
    >
      <option>{value}</option>
    </select>
    <span className="pointer-events-none absolute inset-y-0 right-1 flex items-center">
      <Chevron />
    </span>
  </div>
);

const menus = ["文件(F)", "编辑(E)", "搜索(S)", "查看(V)", "比较(C)", "宏(M)", "工具(T)", "窗口(W)", "帮助(H)"];

const csvModes = ["逗号", "制表符", "分号", "比较", "竖线"];

const App = () => {
  return (
    <div className="flex min-h-screen bg-[#d8d8d8] pt-[6px] pr-2 pb-[7px] pl-[6px] font-['Open_Sans','Noto_Sans_CJK_SC',sans-serif]">
      <Gradients />
      <div className="flex min-w-0 flex-1 flex-col border border-[#23395d] bg-[#fefffb] shadow-[0_0_6px_2px_rgba(0,0,0,0.4)]">
        {/* Title bar */}
        <header className="flex h-8 shrink-0 items-center border-b-2 border-[#f0f0f0] pl-2">
          <Notepad />
          <h1 className="ml-[5px] flex-1 pb-[2px] text-[15px] leading-5 text-[#999]">无标题-1 - EmEditor</h1>
          <button aria-label="最小化" className="flex h-full w-[46px] items-center justify-center">
            <svg width="10" height="10" aria-hidden="true"><path d="M0 4.5h10" stroke="#999" /></svg>
          </button>
          <button aria-label="最大化" className="flex h-full w-[46px] items-center justify-center">
            <svg width="10" height="12" aria-hidden="true"><path d="M.5 .5h9v9h-9z" fill="none" stroke="#999" /></svg>
          </button>
          <button aria-label="关闭" className="flex h-full w-[46px] items-center justify-center">
            <svg width="11" height="12" aria-hidden="true"><path d="M.5 .5l10 10M10.5 .5l-10 10" stroke="#999" /></svg>
          </button>
        </header>

        {/* Menu */}
        <nav className="flex h-[27px] shrink-0 items-center border-b border-[#b4b4bc]">
          <Grip />
          <div className="flex gap-[17px] pl-2">
            {menus.map((menu) => (
              <button key={menu} className="text-[15px] leading-5 font-semibold whitespace-nowrap text-[#777]">
                {menu}
              </button>
            ))}
          </div>
        </nav>

        {/* Toolbars */}
        <div className="flex h-6 shrink-0 overflow-hidden border-b border-[#b4b4bc]">
          <Band className="border-r border-[#b4b4bc] pr-[22px]">
            <Tools
              items={[
                "新建", "v", "打开", "v", "保存", "|", "打印", "打印预览", "|", "剪切", "复制", "粘贴", "v", "|",
                "撤消", "v", "重复", "v", "|", "查找", "查找上一个", "查找下一个", "|", "在文件中查找", "*筛选器", "|",
                "*不换行", "按字符换行", "按窗口换行", "按页面换行", "|", "大纲", "v", "配置", "v", "属性",
                "所有配置属性", "自定义", "v", "|", "停止录制", "运行宏", "|", "固定",
              ]}
            />
          </Band>
          <Band label="插件">
            <Tools
              items={[
                "资源管理器", "*十六进制", "大纲文本", "项目", "网页预览", "搜索插件", "网络搜索", "窗口列表", "字数统计",
              ]}
            />
          </Band>
        </div>

        <div className="flex h-7 shrink-0 overflow-hidden border-b border-[#b4b4bc]">
          <Band label="工具" className="border-r border-[#b4b4bc] pr-[7px]">
            <Tools items={["浏览器", "浏览文件夹", "命令提示符", "外部工具"]} />
          </Band>
          <Band label="宏" className="border-r border-[#b4b4bc] pr-[14px]">
            <Tools
              slot="h-[21px] w-[27px]"
              items={["求和", "验证", "段落标签", "代码片段", "项目搜索", "返回", "选取", "录制项"]}
            />
          </Band>
          <Band label="标记" className="border-r border-[#b4b4bc] pr-[11px]" />
          <Band label="HTML">
            <Tools
              items={[
                "标题", "u", "段落", "换行", "|", "粗体", "斜体", "下划线", "|", "字体", "v", "颜色", "图片", "超链接", "|",
                "表格", "水平线", "注释", "|", "左对齐", "居中", "右对齐", "两端对齐", "|", "编号列表", "项目符号",
                "减少缩进", "增加缩进", "|", "突出显示", "字体颜色", "窗体", "u", "|", "设置",
              ]}
            />
          </Band>
        </div>

        <div className="flex h-7 shrink-0 overflow-hidden border-b border-[#b4b4bc]">
          <Band label="CSV/排序">
            <div className="flex items-center pl-[2px]">
              <Tools slot="h-[25px] w-6" items={["*标准模式", "|"]} />
              {csvModes.map((mode) => (
                <button
                  key={mode}
                  className="flex shrink-0 items-center gap-1 pr-[9px] pl-[2px] text-[15px] leading-5 font-bold whitespace-nowrap text-black"
                >
                  {icons.CSV}
                  {mode}
                </button>
              ))}
              <Tools
                slot="h-[25px] w-6"
                items={[
                  "|", "合并", "|", "转换", "|", "列选择", "u", "修改表", "更新表", "|", "升序", "降序", "数字升序",
                  "数字降序", "长度升序", "长度降序", "高级排序", "|", "删除重复", "高级删除重复", "|", "拆分列",
                  "移动列", "|", "行号", "标尺", "|", "标题行", "u",
                ]}
              />
            </div>
          </Band>
        </div>

        <div className="flex h-[23px] shrink-0 overflow-hidden border-b border-[#b4b4bc]">
          <Band label="筛选">
            <Combo label="筛选" />
            <Select label="筛选列" value="一整行" className="w-[125px]" />
            <Tools
              items={[
                "刷新", "中止", "|", "*增量搜索", "|", "正则表达式", "转义序列", "数字范围", "|", "区分大小写",
                "全字匹配", "反转", "清除筛选", "|", "仅书签", "显示全部", "|", "向下", "u", "|", "高级筛选", "|",
                "*锁定", "|", "撤回筛选", "提取到新文件", "|",
              ]}
            />
            <Select label="上方行数" value="0" className="w-10" />
            <Separator />
            <Select label="下方行数" value="0" className="w-10" />
          </Band>
        </div>

        <div className="flex h-[22px] shrink-0 overflow-hidden border-b border-[#d9d9d9]">
          <Band label="查找">
            <Combo label="查找" />
            <Tools
              items={[
                "上一个", "下一个", "|", "增量搜索", "所有文档", "|", "正则表达式", "转义序列", "数字范围", "|",
                "区分大小写", "全字匹配", "*循环查找", "网格标记", "批量查找", "|", "输出栏", "|", "前进",
              ]}
            />
          </Band>
        </div>

        {/* Document tabs */}
        <div className="flex h-[31px] shrink-0 bg-[#f0f0f0] pt-[2px]">
          <div className="flex items-center border border-b-0 border-l-0 border-[#d9d9d9] bg-[#fefffb] px-2 pb-1">
            <Notepad />
            <button className="mr-3 ml-[6px] text-[15px] leading-5 font-bold whitespace-nowrap text-black">
              无标题-1
            </button>
            <button aria-label="关闭标签">
              <svg width="9" height="8" aria-hidden="true"><path d="M0 0l8 8M8 0l-8 8" stroke="#888" /></svg>
            </button>
          </div>
          <div className="flex-1 border-b border-[#d9d9d9]" />
        </div>

        {/* Editor */}
        <main className="mr-[2px] flex flex-1 flex-col border-r border-b border-[#d9d9d9] pr-[2px] pb-[3px] pl-1">
          <div className="relative flex flex-1 border border-t-2 border-l-2 border-t-[#696969] border-r-[#e3e3e3] border-b-[#e3e3e3] border-l-[#696969]">
            <textarea aria-label="文档内容" className="flex-1 resize-none p-2 text-[14px] outline-none" />
            <svg width="9" height="9" fill="none" className="absolute top-2 left-2" aria-hidden="true">
              <path d="M9 4.5H1M4.5 1L1 4.5 4.5 8" stroke="#1e7be8" />
            </svg>
            <span className="absolute right-[214px] bottom-[186px] font-['DejaVu_Sans_Mono'] text-[15px] leading-5 text-[#ff0000]">
              yinghezhan.com
            </span>
          </div>
        </main>

        {/* Status bar */}
        <footer className="mt-px flex h-[22px] shrink-0 items-center justify-end border-t border-[#d0d0d0] bg-[#f0f0f0] text-[15px] leading-5 font-semibold whitespace-nowrap text-black">
          <span className="border-r border-[#d4d4d4] pr-1">Text</span>
          <span className="w-[86px] border-r border-[#d4d4d4] pl-1">行 1,列 1</span>
          <span className="w-[134px] border-r border-[#d4d4d4] pl-1">简体中文(GB2312)</span>
          <span className="h-5 w-[38px] border-r border-[#d4d4d4]" />
          <span className="h-5 w-[38px] border-r border-[#d4d4d4]" />
          <span className="w-[51px] border-r border-[#d4d4d4] pl-1">0 字符</span>
          <span className="w-[51px] border-r border-[#d4d4d4] pl-1">0/1 行</span>
          <svg width="19" height="18" aria-hidden="true">
            <path d="M14 9h2v2h-2zM11 12h2v2h-2zM14 12h2v2h-2zM8 15h2v2h-2zM11 15h2v2h-2zM14 15h2v2h-2z" fill="#bfbfbf" />
          </svg>
        </footer>
      </div>
    </div>
  );
};

export default App;
